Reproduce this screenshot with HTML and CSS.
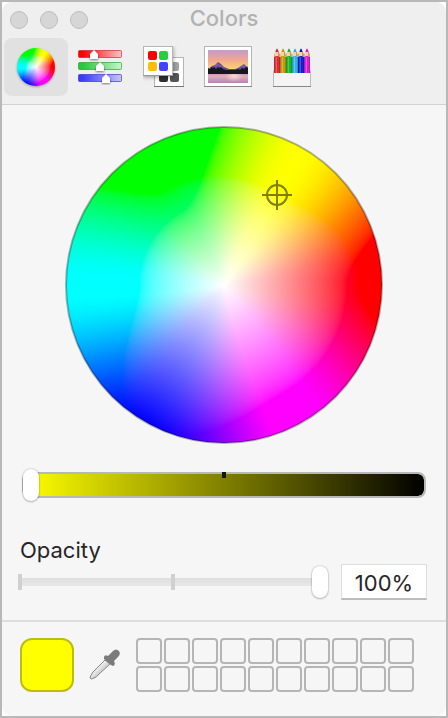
FILE: index.html
```html
<!DOCTYPE html>
<html lang="en">

<head>
    <meta charset="UTF-8">
    <meta name="viewport" content="width=device-width, initial-scale=1.0">
    <title>Colors</title>
    <link rel="stylesheet" href="styles.css">
</head>

<body>
    <main class="window">
        <header>
            <div class="titlebar">
                <div class="lights">
                    <button class="light" aria-label="Close"></button>
                    <button class="light" aria-label="Minimize"></button>
                    <button class="light" aria-label="Zoom"></button>
                </div>
                <h1>Colors</h1>
            </div>

            <nav class="tabs">
                <button class="tab active" aria-label="Color wheel">
                    <canvas class="wheel-canvas small" width="76" height="76"></canvas>
                </button>
                <button class="tab" aria-label="Color sliders">
                    <svg width="44" height="36" viewBox="0 0 44 36">
                        <defs>
                            <linearGradient id="r"><stop offset=".1" stop-color="#f00"/><stop offset="1" stop-color="#ffc4c4"/></linearGradient>
                            <linearGradient id="g"><stop offset=".1" stop-color="#27c83c"/><stop offset="1" stop-color="#c8f5cb"/></linearGradient>
                            <linearGradient id="b"><stop offset=".1" stop-color="#3c3cff"/><stop offset="1" stop-color="#c4c4ff"/></linearGradient>
                        </defs>
                        <rect x=".5" y="1.500" width="43" height="7" rx="1" fill="url(#r)" stroke="#c52020" stroke-opacity=".65"/>
                        <rect x=".5" y="13.500" width="43" height="7" rx="1" fill="url(#g)" stroke="#209a30" stroke-opacity=".65"/>
                        <rect x=".5" y="25.500" width="43" height="7" rx="1" fill="url(#b)" stroke="#3030bb" stroke-opacity=".65"/>
                        <g class="knobs">
                            <path d="M12 10V5l4-4 4 4v5z"/>
                            <path d="M18 22v-5l4-4 4 4v5z"/>
                            <path d="M24 34v-5l4-4 4 4v5z"/>
                        </g>
                    </svg>
                </button>
                <button class="tab" aria-label="Color palettes">
                    <svg width="42" height="42" viewBox="0 0 42 42">
                        <rect x="11.500" y="11.500" width="29" height="29" fill="#fff" stroke="#b5b5b5"/>
                        <path d="M11 40.500h30" stroke="#777"/>
                        <rect x="16" y="16" width="9" height="9" rx="2" fill="#777"/>
                        <rect x="27" y="16" width="9" height="9" rx="2" fill="#a2a2a6"/>
                        <rect x="16" y="27" width="9" height="9" rx="2" fill="#303030"/>
                        <rect x="27" y="27" width="9" height="9" rx="2" fill="#555"/>
                        <g class="front">
                            <rect x=".5" y=".5" width="29" height="29" fill="#fff" stroke="#b5b5b5"/>
                            <path d="M0 29.500h30" stroke="#999"/>
                        </g>
                        <rect x="5" y="5" width="9" height="9" rx="2" fill="#f00"/>
                        <rect x="16" y="5" width="9" height="9" rx="2" fill="#28cc41"/>
                        <rect x="5" y="16" width="9" height="9" rx="2" fill="#ffbf00"/>
                        <rect x="16" y="16" width="9" height="9" rx="2" fill="#4141ff"/>
                    </svg>
                </button>
                <button class="tab" aria-label="Image palettes">
                    <svg width="48" height="42" viewBox="0 0 48 42">
                        <defs>
                            <linearGradient id="sky" x2="0" y2="1"><stop stop-color="#c39bcb"/><stop offset=".45" stop-color="#eea594"/><stop offset="1" stop-color="#ffd66b"/></linearGradient>
                            <linearGradient id="lake" x2="0" y2="1"><stop stop-color="#cf91ac"/><stop offset=".35" stop-color="#e4abc0"/><stop offset="1" stop-color="#b681b5"/></linearGradient>
                            <radialGradient id="glow"><stop stop-color="#fff0d8" stop-opacity=".7"/><stop offset="1" stop-color="#fff0d8" stop-opacity="0"/></radialGradient>
                        </defs>
                        <rect x=".5" y=".5" width="47" height="40" fill="#fff" stroke="#b5b5b5"/>
                        <path d="M0 40.500h48" stroke="#888"/>
                        <rect x="4" y="4" width="40" height="20" fill="url(#sky)"/>
                        <rect x="4" y="27" width="40" height="10" fill="url(#lake)"/>
                        <ellipse cx="30" cy="30" rx="9" ry="6" fill="url(#glow)"/>
                        <path d="M4 24l4-4 3-1 3-3 3 2 3 3 5 2h6l3-1 3-2 3-2 2 2 2 1v4H4z" fill="#5e4b96"/>
                        <path d="M10 20l4-3 1 2 2 0 3 3-4-1-2-2-2 2zM35 22l5-3 2 2-3 0z" fill="#8164a4"/>
                        <path d="M4 22l2 1 1-2 2 1 1-1 2 2 2-2 1 1 2-1 2 2 3 1h10l2-1 2 1 2-2 2 1 2-2 2 1v6H4z" fill="#171720"/>
                    </svg>
                </button>
                <button class="tab" aria-label="Pencils">
                    <svg width="40" height="42" viewBox="0 0 40 42">
                        <defs>
                            <linearGradient id="shade"><stop stop-color="#000" stop-opacity=".2"/><stop offset=".4" stop-color="#fff" stop-opacity=".3"/><stop offset=".6" stop-color="#fff" stop-opacity="0"/><stop offset="1" stop-color="#000" stop-opacity=".3"/></linearGradient>
                            <g id="pencil">
                                <path d="M0 9L2 3Q3 0 4 3L6 9V26H0z"/>
                                <path d="M0 10L1 5h4L6 10Q3 8 0 10z" fill="#f2d5a4"/>
                                <path d="M4 5h1L6 10Q5 9 4 9z" fill="#c79a63"/>
                                <rect y="10" width="6" height="16" fill="url(#shade)"/>
                            </g>
                        </defs>
                        <rect x="1.500" y="25" width="37" height="15.500" fill="#f5f5f5" stroke="#bbb"/>
                        <use href="#pencil" x="2" y="1" fill="#e3202c"/>
                        <use href="#pencil" x="8" y="1" fill="#c49a00"/>
                        <use href="#pencil" x="14" y="1" fill="#0cb819"/>
                        <use href="#pencil" x="20" y="1" fill="#22b2ef"/>
                        <use href="#pencil" x="26" y="1" fill="#0717d5"/>
                        <use href="#pencil" x="32" y="1" fill="#dc12d9"/>
                        <rect x="2" y="27" width="36" height="13" fill="#f4f4f4"/>
                        <path d="M1 40.500h38" stroke="#888"/>
                    </svg>
                </button>
            </nav>
        </header>

        <section class="picker">
            <div class="wheel">
                <canvas class="wheel-canvas" width="316" height="316"></canvas>
                <svg class="target" width="30" height="30" viewBox="0 0 30 30">
                    <circle cx="15" cy="15" r="10"/>
                    <path d="M15 0v30M0 15h30"/>
                </svg>
            </div>

            <div class="brightness">
                <input type="range" min="0" max="100" value="0" aria-label="Brightness">
                <span class="tick"></span>
            </div>

            <label class="opacity-label" for="opacity">Opacity</label>
            <div class="opacity-row">
                <div class="opacity-slider">
                    <input type="range" id="opacity" min="0" max="100" value="100">
                </div>
                <input type="text" class="percent" value="100%" aria-label="Opacity percent">
            </div>
        </section>

        <footer>
            <button class="current" aria-label="Current color"></button>
            <button class="dropper" aria-label="Pick a color from the screen">
                <svg width="32" height="32" viewBox="0 0 32 32">
                    <defs>
                        <linearGradient id="glass" x1="0" y1="0" x2="1" y2="1"><stop offset=".3" stop-color="#fff"/><stop offset=".7" stop-color="#bbb"/></linearGradient>
                    </defs>
                    <path d="M16 11L4 23Q1 27 1 29Q2 31 5 29Q8 28 9 26L21 15z" fill="url(#glass)" stroke="#858585"/>
                    <path d="M15 8Q16 5 19 7L24 2Q27 -1 30 2Q32 5 29 8L25 12Q27 16 24 17L22 16L15 10z" fill="#7b7b7b"/>
                </svg>
            </button>
            <div class="wells"></div>
        </footer>
    </main>

    <script src="script.js"></script>
</body>

</html>
```

FILE: styles.css
```css
* {
    box-sizing: border-box;
}

body {
    margin: 0;
    border: 2px solid #b8b8b8;
    background-color: #fff;
    color: #262626;
    font-family: Inter, "Liberation Sans", sans-serif;
    font-size: 22px;
}

button {
    padding: 0;
    border: 0;
    background: none;
}

canvas,
svg {
    display: block;
}

.window {
    border-radius: 10px;
    background-color: #f6f6f6;
    overflow: hidden;
}

header {
    padding-bottom: 8px;
    border-bottom: 1px solid #d2d2d2;
    background-color: #efefef;
}

.titlebar {
    display: grid;
    grid-template-columns: 1fr auto 1fr;
    align-items: center;
    height: 36px;
    padding: 0 8px;
}

.lights {
    display: flex;
    gap: 12px;
}

.light {
    width: 18px;
    height: 18px;
    border: 1px solid #bdbdbd;
    border-radius: 50%;
    background-color: #d6d6d6;
}

h1 {
    margin: 0;
    padding-bottom: 4px;
    color: #b2b2b2;
    font-size: 22px;
    font-weight: 500;
    line-height: 28px;
}

.tabs {
    display: flex;
    padding-left: 2px;
}

.tab {
    display: flex;
    justify-content: center;
    align-items: center;
    width: 64px;
    height: 58px;
    border-radius: 8px;
}

.active {
    background-color: #e1e1e1;
}

.small {
    width: 38px;
    height: 38px;
    border-radius: 50%;
    filter: drop-shadow(0 1px 1px rgba(0, 0, 0, 0.3));
}

.knobs {
    fill: #fff;
    filter: drop-shadow(0 1px 1px rgba(0, 0, 0, 0.5));
}

.front {
    filter: drop-shadow(0 1px 2px rgba(0, 0, 0, 0.4));
}

.picker {
    padding: 22px 18px 20px;
}

.wheel {
    position: relative;
    width: 316px;
    margin: 0 auto;
    border-radius: 50%;
}

.wheel .wheel-canvas {
    border-radius: 50%;
}

.wheel::after {
    content: "";
    position: absolute;
    inset: -1px;
    border: 2px solid rgba(0, 0, 0, 0.3);
    border-radius: 50%;
}

.target {
    position: absolute;
    left: 196px;
    top: 53px;
    fill: none;
    stroke: #7f7f00;
    stroke-width: 2;
}

input[type="range"] {
    -webkit-appearance: none;
    appearance: none;
    display: block;
    width: 100%;
    margin: 0;
    background: none;
}

input[type="range"]::-webkit-slider-thumb {
    -webkit-appearance: none;
    width: 16px;
    height: 32px;
    border-radius: 8px;
    background-color: #fff;
    box-shadow: 0 0 2px rgba(0, 0, 0, 0.3), 0 1px 2px rgba(0, 0, 0, 0.2);
}

.brightness {
    position: relative;
    margin: 29px 2px 0;
    border: 2px solid #b8b8b8;
    border-radius: 8px;
    background: linear-gradient(to right, #ff0, #000) padding-box;
}

.brightness input {
    width: auto;
    min-width: 100%;
    height: 22px;
    margin-left: -1px;
}

.tick {
    position: absolute;
    left: 50%;
    top: -2px;
    width: 4px;
    height: 6px;
    margin-left: -2px;
    background-color: #161600;
}

.opacity-label {
    display: block;
    margin-top: 38px;
    line-height: 28px;
}

.opacity-row {
    display: flex;
    align-items: center;
    gap: 13px;
}

.opacity-slider {
    flex: 1;
    margin-left: -2px;
    background:
        linear-gradient(#d0d0d0, #d0d0d0) left / 4px 16px no-repeat,
        linear-gradient(#d0d0d0, #d0d0d0) center / 4px 16px no-repeat,
        linear-gradient(#dedede, #e8e8e8) center / 100% 8px no-repeat;
}

.percent {
    width: 86px;
    height: 36px;
    margin-right: 1px;
    padding: 2px 0 0;
    border: 1px solid #dedede;
    border-bottom: 2px solid #bcbcbc;
    background-color: #fff;
    color: #262626;
    font: inherit;
    text-align: center;
}

footer {
    display: flex;
    align-items: center;
    padding: 16px 18px 24px;
    border-top: 2px solid #dedede;
}

.current {
    width: 54px;
    height: 54px;
    border: 2px solid #bdbd10;
    border-radius: 12px;
    background-color: #ff0;
}

.dropper {
    margin: 0 15px;
}

.wells {
    display: grid;
    grid-template-columns: repeat(10, 26px);
    gap: 2px;
}

.well {
    height: 26px;
    border: 2px solid #b5b5b5;
    border-radius: 4px;
}
```

FILE: script.js
```js
// the wheel is hue/saturation in Display P3, clipped to sRGB
function toLinear(v) {
    return v <= 0.04045 ? v / 12.92 : Math.pow((v + 0.055) / 1.055, 2.4);
}

function toByte(v) {
    v = Math.min(1, Math.max(0, v));
    return 255 * (v <= 0.0031308 ? v * 12.92 : 1.055 * Math.pow(v, 1 / 2.4) - 0.055);
}

// eased, so the pure hues get wide bands
function channel(n, hue, sat) {
    const k = (n + hue / 60) % 6;
    const t = Math.max(0, Math.min(k, 4 - k, 1));
    return toLinear(1 - sat * t * t * (3 - 2 * t));
}

document.querySelectorAll(".wheel-canvas").forEach((canvas) => {
    const ctx = canvas.getContext("2d");
    const size = canvas.width;
    const image = ctx.createImageData(size, size);
    const mid = size / 2;

    for (let y = 0; y < size; y++) {
        for (let x = 0; x < size; x++) {
            const dx = x + 0.5 - mid;
            const dy = mid - y - 0.5;
            const hue = (Math.atan2(dy, dx) * 180 / Math.PI + 360) % 360;
            const sat = Math.min(1, Math.hypot(dx, dy) / mid);
            const r = channel(5, hue, sat);
            const g = channel(3, hue, sat);
            const b = channel(1, hue, sat);
            const i = (y * size + x) * 4;

            image.data[i] = toByte(1.2249 * r - 0.2247 * g);
            image.data[i + 1] = toByte(-0.0420 * r + 1.0419 * g);
            image.data[i + 2] = toByte(-0.0197 * r - 0.0786 * g + 1.0979 * b);
            image.data[i + 3] = 255;
        }
    }
    ctx.putImageData(image, 0, 0);
});

const wells = document.querySelector(".wells");
for (let i = 1; i <= 20; i++) {
    const well = document.createElement("button");
    well.className = "well";
    well.setAttribute("aria-label", "Saved color " + i);
    wells.appendChild(well);
}
```
